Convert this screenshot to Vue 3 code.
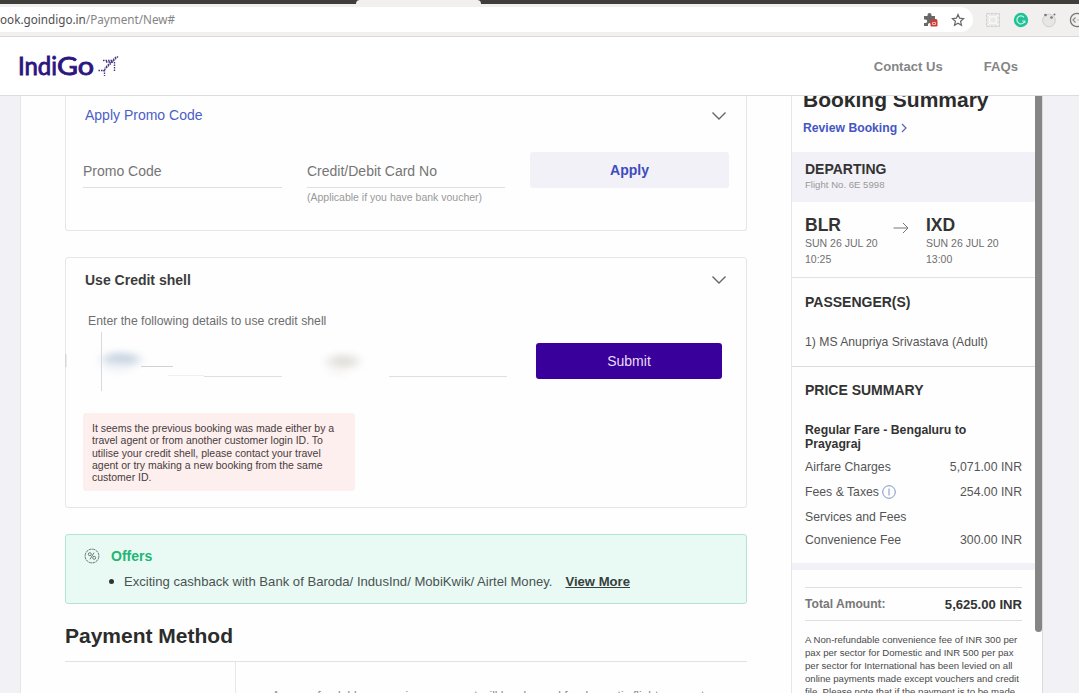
<template>
  <div class="window">
    <div class="tab-strip"><div class="active-tab"></div></div>

    <div class="toolbar">
      <div class="address-bar">
        <svg class="url" width="180" height="24">
          <text x="0" y="16" textLength="175" lengthAdjust="spacingAndGlyphs"><tspan fill="#505050">ook.goindigo.in</tspan><tspan fill="#858585">/Payment/New#</tspan></text>
        </svg>
        <svg class="puzzle" width="16" height="16" viewBox="0 0 16 16">
          <path d="M1 4h3.500V3a2 2 0 0 1 4 0v1H12v3h1a1.600 1.600 0 0 1 0 3h-2v4H8v-1.500a1.500 1.500 0 0 0-3 0V14H1v-3h1.500a1.600 1.600 0 0 0 0-3.500H1z" fill="#686868" />
          <rect x="7.500" y="7.500" width="7" height="7" rx="1.200" fill="#cf3b36" />
          <path d="M9.500 12.500v-2h3v2z" fill="none" stroke="#f3b5b0" />
        </svg>
        <svg width="14" height="14" viewBox="0 0 14 14">
          <path d="M7 1.500l1.600 3.700 4 .4-3 2.700.9 4L7 10.200l-3.500 2.100.9-4-3-2.700 4-.4z" fill="none" stroke="#666" stroke-width="1.200" />
        </svg>
      </div>
      <div class="extensions">
        <svg width="16" height="16" viewBox="0 0 16 16">
          <rect x="1.500" y="1.500" width="13" height="13" fill="#e9e9e8" stroke="#cfcfce" stroke-dasharray="3 1" />
          <circle cx="8" cy="8" r="3.500" fill="none" stroke="#f8f8f8" stroke-width="1.500" />
          <path d="M3 3l2 2M13 3l-2 2M3 13l2-2M13 13l-2-2" stroke="#fff" />
        </svg>
        <svg width="16" height="16" viewBox="0 0 16 16">
          <circle cx="8" cy="8" r="7.200" fill="#1fc195" />
          <path d="M11 5.300A4 4 0 1 0 11.800 9H9.200M11.800 9v2" fill="none" stroke="#c9f5e7" stroke-width="1.200" />
        </svg>
        <svg width="16" height="16" viewBox="0 0 16 16">
          <circle cx="8" cy="8.500" r="6.300" fill="#e6e6e5" stroke="#cfcfce" />
          <circle cx="4.500" cy="3" r="1.300" fill="#777" />
          <circle cx="10.500" cy="5.500" r="1.300" fill="#777" />
          <circle cx="13.500" cy="2.500" r="1" fill="#777" />
        </svg>
        <svg width="16" height="16" viewBox="0 0 16 16">
          <circle cx="8" cy="8" r="6.600" fill="none" stroke="#777" stroke-width="1.300" />
          <path d="M6.500 5.500L4 8l2.500 2.500M8.500 8h1" fill="none" stroke="#888" stroke-width="1.200" />
        </svg>
      </div>
    </div>

    <header class="site-header">
      <svg class="logo" width="104" height="44" viewBox="0 0 104 44">
        <text y="31"><tspan x="-1" textLength="39" lengthAdjust="spacingAndGlyphs">Indi</tspan><tspan x="38" textLength="37" lengthAdjust="spacingAndGlyphs">Go</tspan></text>
        <g fill="none" stroke="#4a3585" stroke-width="1.400" stroke-dasharray="1.500 1">
          <path d="M84 16.500h11M87 18h7" />
          <path d="M99 12.500L84 27" />
          <path d="M97 13L86 24" />
          <path d="M95.500 18v9" />
          <path d="M79.500 26.500h6M85.500 26v6" />
        </g>
      </svg>
      <nav>
        <a class="contact">Contact Us</a>
        <a>FAQs</a>
      </nav>
    </header>

    <div class="page">
      <main class="content">
        <section class="card promo">
          <div class="card-head">
            <span class="promo-title">Apply Promo Code</span>
            <svg class="chevron" width="16" height="10" viewBox="0 0 16 10"><path d="M1.500 1.500L8 8l6.500-6.500" /></svg>
          </div>
          <div class="promo-form">
            <div class="field">Promo Code</div>
            <div>
              <div class="field card-no">Credit/Debit Card No</div>
              <div class="hint">(Applicable if you have bank voucher)</div>
            </div>
            <button class="apply">Apply</button>
          </div>
        </section>

        <section class="card shell">
          <div class="card-head">
            <span class="shell-title">Use Credit shell</span>
            <svg class="chevron" width="16" height="10" viewBox="0 0 16 10"><path d="M1.500 1.500L8 8l6.500-6.500" /></svg>
          </div>
          <p class="shell-text">Enter the following details to use credit shell</p>
          <div class="shell-form">
            <!-- masked PNR and e-mail values -->
            <svg class="masked" width="472" height="60" viewBox="65 332 472 60">
              <defs>
                <filter id="smudge" x="-50%" y="-100%" width="200%" height="300%"><feGaussianBlur stdDeviation="6 3.500" /></filter>
              </defs>
              <g filter="url(#smudge)">
                <ellipse cx="121" cy="359.500" rx="18" ry="7" fill="#c9d5e2" />
                <ellipse cx="117" cy="368" rx="14" ry="5" fill="#f0f4f8" />
                <ellipse cx="343" cy="361.500" rx="15" ry="7" fill="#e2e0dc" />
                <ellipse cx="338" cy="371" rx="9" ry="5" fill="#f8f6f4" />
              </g>
              <path d="M101.500 332v59" stroke="#d9d9d9" />
              <path d="M65.500 354v13" stroke="#d5d8dd" stroke-width="2" />
              <path d="M141 366.500h32" stroke="#d2d2d2" />
              <path d="M168 375.500h36" stroke="#efefef" />
              <path d="M204 376.500h78M389 376.500h118" stroke="#dfdfdf" />
            </svg>
            <button class="submit">Submit</button>
          </div>
          <div class="error">
            It seems the previous booking was made either by a<br>
            travel agent or from another customer login ID. To<br>
            utilise your credit shell, please contact your travel<br>
            agent or try making a new booking from the same<br>
            customer ID.
          </div>
        </section>

        <section class="offers">
          <div class="offers-head">
            <svg width="16" height="16" viewBox="0 0 16 16" fill="none" stroke="#6b7a75">
              <circle cx="8" cy="8" r="6.900" stroke-dasharray="3 .6" />
              <circle cx="5.800" cy="6.200" r="1.500" />
              <circle cx="10.200" cy="9.800" r="1.500" />
              <path d="M10 4.700L6 11.300" />
            </svg>
            <span>Offers</span>
          </div>
          <div class="offer">
            <i class="dot"></i>
            <span>Exciting cashback with Bank of Baroda/ IndusInd/ MobiKwik/ Airtel Money.</span>
            <a>View More</a>
          </div>
        </section>

        <h2 class="method-title">Payment Method</h2>
        <div class="methods">
          <div class="method-list"></div>
          <div class="method-note">A non-refundable convenience amount will be charged for domestic flight per sector</div>
        </div>
      </main>

      <aside class="summary">
        <h2>Booking Summary</h2>
        <a class="review">Review Booking
          <svg width="6" height="10" viewBox="0 0 6 10"><path d="M1 1l4 4-4 4" fill="none" stroke="#5566b8" stroke-width="1.200" /></svg>
        </a>
        <div class="departing">
          <h3>DEPARTING</h3>
          <p>Flight No. 6E 5998</p>
        </div>
        <div class="route">
          <div class="stop">
            <strong>BLR</strong>
            <span>SUN 26 JUL 20</span>
            <span>10:25</span>
          </div>
          <svg width="16" height="12" viewBox="0 0 16 12"><path d="M.5 6h14M10 1l5 5-5 5" fill="none" stroke="#777" /></svg>
          <div class="stop">
            <strong>IXD</strong>
            <span>SUN 26 JUL 20</span>
            <span>13:00</span>
          </div>
        </div>
        <div class="passengers">
          <h3>PASSENGER(S)</h3>
          <p>1) MS Anupriya Srivastava (Adult)</p>
        </div>
        <div class="prices">
          <h3>PRICE SUMMARY</h3>
          <h4>Regular Fare - Bengaluru to<br>Prayagraj</h4>
          <div v-for="row in charges" :key="row.label" :class="['charge', row.size]">
            <span class="label">{{ row.label }}
              <svg v-if="row.info" width="14" height="14" viewBox="0 0 14 14" fill="none" stroke="#7f93bf"><circle cx="7" cy="7" r="6.300" /><path d="M7 3.500v7" /></svg>
            </span>
            <span>{{ row.amount }}</span>
          </div>
        </div>
        <div class="total">
          <span>Total Amount:</span>
          <strong>5,625.00 INR</strong>
        </div>
        <p class="note">
          A Non-refundable convenience fee of INR 300 per<br>
          pax per sector for Domestic and INR 500 per pax<br>
          per sector for International has been levied on all<br>
          online payments made except vouchers and credit<br>
          file. Please note that if the payment is to be made
        </p>
      </aside>

      <div class="scroll-track"><div class="scroll-thumb"></div></div>
    </div>
  </div>
</template>

<script setup>
const charges = [
  { label: 'Airfare Charges', amount: '5,071.00 INR' },
  { label: 'Fees & Taxes', amount: '254.00 INR', info: true },
  { label: 'Services and Fees', amount: '' },
  { label: 'Convenience Fee', amount: '300.00 INR', size: 'short' }
];
</script>

<style>
body { margin: 0; background: #f1f1f6; }
</style>

<style scoped>
* { box-sizing: border-box; }
h2, h3, h4, p { margin: 0; }
svg { display: block; flex: none; }
.window { width: 1079px; height: 693px; overflow: hidden; display: flex; flex-direction: column; font-family: "Liberation Sans", Arial, sans-serif; color: #333; }

/* browser chrome */
.tab-strip { height: 4px; background: #403e3b; flex: none; }
.active-tab { width: 125px; height: 4px; margin-left: 356px; background: #f1f0ef; border-radius: 4px 4px 0 0; }
.toolbar { height: 33px; flex: none; display: flex; background: #f1f0ef; border-bottom: 1px solid #d9d9d9; padding-top: 3px; }
.address-bar { width: 973px; height: 25px; background: #fff; border-radius: 0 13px 13px 0; display: flex; align-items: center; padding-right: 8px; flex: none; }
.url { font-family: "Noto Sans", "Open Sans", sans-serif; font-size: 12px; }
.puzzle { margin-left: auto; margin-right: 12px; }
.extensions { display: flex; gap: 12px; align-items: center; height: 25px; padding-left: 12px; }

/* site header */
.site-header { height: 59px; flex: none; background: #fff; border-bottom: 1px solid #dcdcdc; display: flex; align-items: center; justify-content: space-between; padding: 0 61px 0 19px; }
.logo { font-family: Lato, sans-serif; font-size: 25px; fill: #2c1580; overflow: visible; }
.logo text { stroke: #2c1580; stroke-width: .9px; }
.site-header nav { display: flex; gap: 41px; font-size: 13.1px; font-weight: bold; color: #858585; }

/* page body */
.page { flex: 1; min-height: 0; display: flex; margin-left: 20px; border-left: 1px solid #e6e6ea; background: #fefefe; width: 1023px; overflow: hidden; }
.content { width: 682px; margin-left: 44px; flex: none; }
.card { border: 1px solid #e6e6e6; border-radius: 3px; background: #fefefe; }
.card-head { display: flex; justify-content: space-between; align-items: center; padding: 0 19px; height: 20px; font-size: 14px; }
.chevron { margin-top: 2px; }
.chevron path { fill: none; stroke: #666; stroke-width: 1.4; }
.promo { height: 135px; border-top: 0; border-radius: 0 0 3px 3px; padding-top: 9px; }
.promo-title { color: #4c5fc4; }
.promo-form { display: flex; padding: 27px 17px 0; justify-content: space-between; }
.field { width: 199px; height: 36px; line-height: 38px; font-size: 14px; color: #757575; border-bottom: 1px solid #dedede; }
.field.card-no { width: 198px; }
.hint { font-size: 10.5px; color: #999; line-height: 18px; }
button { border: 0; border-radius: 3px; font-family: inherit; font-size: 14px; height: 36px; padding: 0; }
.apply { width: 199px; background: #f2f1f7; color: #3c4bbd; font-weight: bold; }

.shell { height: 251px; margin-top: 26px; padding-top: 11px; }
.shell-title { font-weight: bold; color: #3c3c3c; margin-top: 1px; }
.shell-text { padding-left: 22px; margin-top: 22px; height: 20px; line-height: 20px; font-size: 12.25px; color: #6e6e6e; }
.shell-form { display: flex; margin: 1px 0 21px -1px; }
.submit { width: 186px; background: #3a009b; color: #e6def5; margin: 11px 0 0 -1px; }
.error { margin-left: 17px; width: 272px; height: 78px; background: #feefef; border-radius: 3px; padding: 9px; font-size: 10.5px; line-height: 12.25px; color: #463c3c; white-space: nowrap; }

.offers { height: 70px; margin-top: 26px; background: #e9faf5; border: 1px solid #b3e3d1; border-radius: 3px; padding: 11px 18px 0; }
.offers-head { display: flex; align-items: center; height: 20px; gap: 11px; font-size: 14px; font-weight: bold; color: #22b573; }
.offer { display: flex; align-items: center; height: 20px; margin-top: 5px; padding-left: 25px; font-size: 13.1px; color: #4a5350; white-space: nowrap; }
.dot { width: 5px; height: 5px; border-radius: 50%; background: #333; margin-right: 10px; }
.offer a { font-weight: bold; text-decoration: underline; margin-left: 13px; color: #35403c; }

.method-title { font-size: 21px; line-height: 24px; margin-top: 20px; color: #2c2c2c; }
.methods { margin-top: 13px; border-top: 1px solid #e2e2e2; display: flex; height: 60px; }
.method-list { width: 171px; flex: none; border-right: 1px solid #e6e6e6; }
.method-note { padding: 25px 0 0 36px; font-size: 12px; line-height: 18px; color: #888; white-space: nowrap; }

/* booking summary */
.summary { width: 244px; margin-left: 44px; border-left: 1px solid #e6e6ea; flex: none; overflow: hidden; white-space: nowrap; }
.summary h2 { font-size: 21px; line-height: 24px; margin: -8px 0 0 11px; color: #2c2c2c; }
.summary h3 { font-size: 14px; line-height: 20px; color: #333; }
.review { display: flex; align-items: center; gap: 4px; margin: 6px 0 0 11px; height: 20px; font-size: 12.2px; font-weight: bold; color: #4456c4; }
.departing { background: #f2f1f7; height: 50px; margin-top: 14px; padding: 7px 13px; }
.departing p { font-size: 9.6px; line-height: 12px; color: #999; }
.route { display: flex; height: 76px; border-bottom: 1px solid #e2e2e2; padding: 13px 13px 0; }
.route svg { margin: 7px 17px 0 15px; }
.stop { display: flex; flex-direction: column; width: 73px; font-size: 10.5px; line-height: 16px; color: #6e6e6e; }
.stop strong { font-size: 17.5px; line-height: 20px; color: #333; }
.passengers { height: 89px; border-bottom: 1px solid #dcdcdc; padding: 14px 13px 0; }
.passengers p { font-size: 12.2px; line-height: 20px; margin-top: 20px; color: #555; }
.prices { height: 203px; border-bottom: 7px solid #f2f1f7; padding: 13px 13px 0; }
.prices h4 { font-size: 12.25px; line-height: 14px; margin: 23px 0 3px; color: #333; }
.charge { display: flex; justify-content: space-between; align-items: center; height: 25px; font-size: 12.25px; color: #555; }
.charge.short { height: 21px; }
.label { display: flex; align-items: center; gap: 3px; }
.total { margin: 17px 13px 0; height: 34px; border: solid #dedede; border-width: 1px 0; display: flex; justify-content: space-between; align-items: center; font-size: 12.1px; font-weight: bold; color: #777; }
.total strong { font-size: 13.1px; color: #333; }
.note { margin: 12px 13px 0; font-size: 9.6px; line-height: 13.1px; color: #4a4a4a; }

.scroll-track { width: 8px; flex: none; border-right: 1px solid #dadade; }
.scroll-thumb { width: 7px; height: 536px; background: #858585; border-radius: 0 0 4px 4px; }
</style>
